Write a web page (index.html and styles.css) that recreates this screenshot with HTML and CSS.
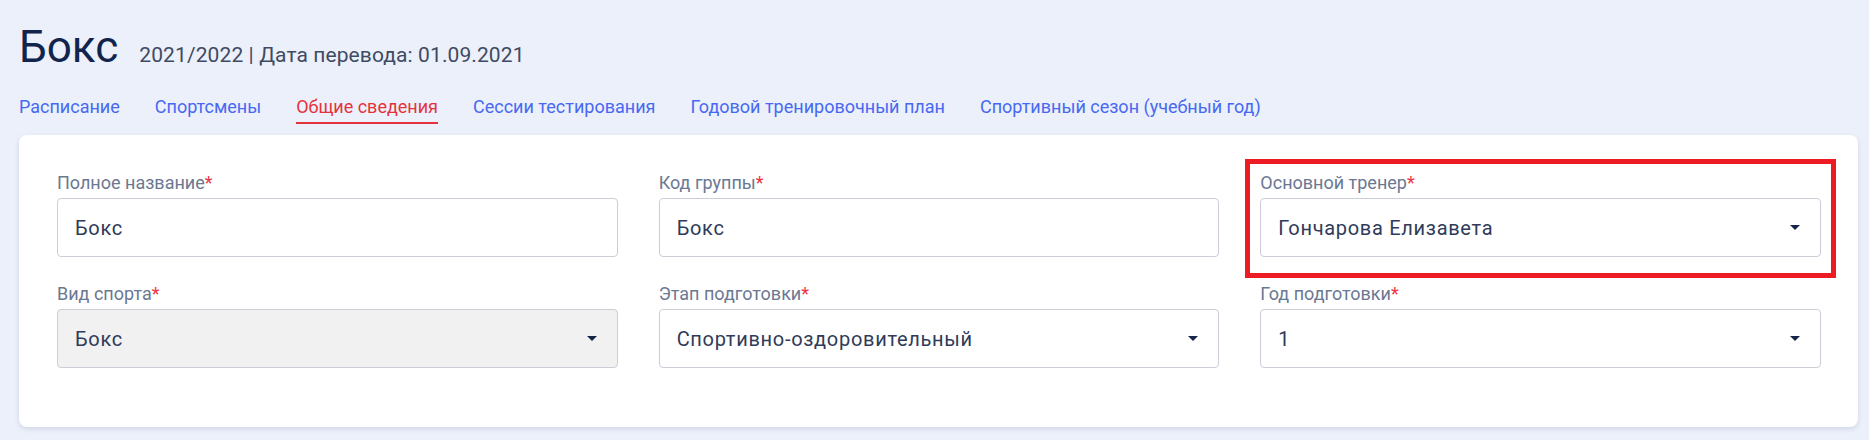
FILE: index.html
```html
<!DOCTYPE html>
<html lang="ru">
<head>
<meta charset="utf-8">
<title>Бокс</title>
<link rel="stylesheet" href="styles.css">
</head>
<body>
<div class="page">
  <header class="head">
    <h1 class="title">Бокс</h1>
    <span class="subtitle">2021/2022 | Дата перевода: 01.09.2021</span>
  </header>
  <nav class="tabs">
    <a class="tab">Расписание</a>
    <a class="tab">Спортсмены</a>
    <a class="tab active">Общие сведения</a>
    <a class="tab">Сессии тестирования</a>
    <a class="tab">Годовой тренировочный план</a>
    <a class="tab">Спортивный сезон (учебный год)</a>
  </nav>
  <section class="card">
    <div class="grid">
      <div class="field">
        <label class="label">Полное название<span class="req">*</span></label>
        <div class="input"><span class="value">Бокс</span></div>
      </div>
      <div class="field">
        <label class="label">Код группы<span class="req">*</span></label>
        <div class="input"><span class="value">Бокс</span></div>
      </div>
      <div class="field">
        <label class="label">Основной тренер<span class="req">*</span></label>
        <div class="input select"><span class="value">Гончарова Елизавета</span><span class="caret"></span></div>
        <div class="highlight"></div>
      </div>
      <div class="field">
        <label class="label">Вид спорта<span class="req">*</span></label>
        <div class="input select disabled"><span class="value">Бокс</span><span class="caret"></span></div>
      </div>
      <div class="field">
        <label class="label">Этап подготовки<span class="req">*</span></label>
        <div class="input select"><span class="value">Спортивно-оздоровительный</span><span class="caret"></span></div>
      </div>
      <div class="field">
        <label class="label">Год подготовки<span class="req">*</span></label>
        <div class="input select"><span class="value">1</span><span class="caret"></span></div>
      </div>
    </div>
  </section>
</div>
</body>
</html>
```
FILE: styles.css
```css
* { box-sizing: border-box; }
html, body { margin: 0; padding: 0; }
body {
  background: #ecf0fa;
  font-family: Roboto, "Noto Sans", "Liberation Sans", sans-serif;
  width: 1869px;
  height: 440px;
  overflow: hidden;
}
.page {
  padding: 25px 11px 0 19px;
}
.head {
  display: flex;
  align-items: baseline;
  gap: 21px;
  height: 44px;
}
.title {
  margin: 0;
  font-size: 44px;
  line-height: 44px;
  font-weight: 400;
  color: #11244d;
}
.subtitle {
  font-size: 21px;
  letter-spacing: 0.1px;
  color: #3f4b63;
}
.tabs {
  display: flex;
  gap: 35px;
  margin-top: 27px;
}
.tab {
  font-size: 18px;
  line-height: 21px;
  color: #4769f2;
  padding-bottom: 5px;
  border-bottom: 2px solid transparent;
  cursor: pointer;
}
.tab.active {
  color: #e5333b;
  border-bottom-color: #e5333b;
}
.card {
  margin-top: 11px;
  background: #fff;
  border-radius: 8px;
  box-shadow: 0 2px 5px rgba(40, 60, 110, 0.14);
  padding: 37px 37px 59px 38px;
}
.grid {
  display: grid;
  grid-template-columns: repeat(3, 1fr);
  column-gap: 41px;
  row-gap: 26px;
}
.field {
  position: relative;
  display: flex;
  flex-direction: column;
}
.label {
  font-size: 18px;
  line-height: 21px;
  color: #6b7892;
  margin-bottom: 5px;
}
.req { color: #ef3340; }
.input {
  height: 59px;
  border: 1px solid #cbced7;
  border-radius: 4px;
  background: #fff;
  display: flex;
  align-items: center;
  padding: 0 20px 0 17px;
  font-size: 20px;
  color: #2f3b58;
  letter-spacing: 0.7px;
}
.input.disabled { background: #f1f1f2; }
.value { flex: 1; }
.caret {
  width: 0;
  height: 0;
  border-left: 5px solid transparent;
  border-right: 5px solid transparent;
  border-top: 5px solid #14254a;
}
.highlight {
  position: absolute;
  top: -13px;
  left: -15px;
  right: -15px;
  bottom: -21px;
  border: 5px solid #ed1c24;
  pointer-events: none;
}
```
